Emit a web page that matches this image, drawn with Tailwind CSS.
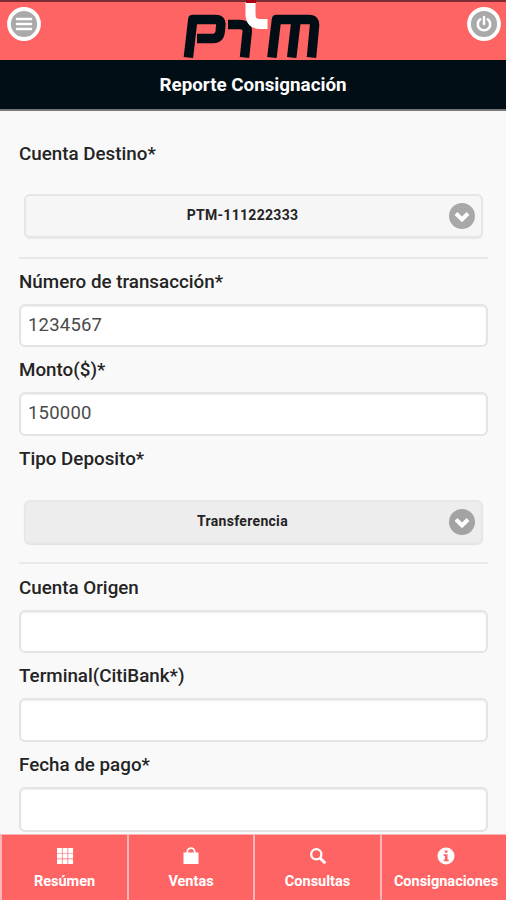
<!DOCTYPE html>
<html lang="es">
<head>
<meta charset="utf-8">
<title>Reporte Consignación</title>
<script src="https://cdn.jsdelivr.net/npm/@tailwindcss/browser@4"></script>
</head>
<body class="bg-[#f9f9f9]">
<div class="flex h-[900px] w-[506px] flex-col overflow-hidden bg-[#f9f9f9] font-['Roboto',sans-serif] text-[#242424]">
  <header class="flex h-[60px] shrink-0 items-start justify-between border-t-2 border-[#7d2c35] bg-[#ff6464] pr-[4px] pl-[6px]">
    <button class="mt-[4px] size-9" aria-label="Menú">
      <svg viewBox="0 0 36 36" class="size-9"><circle cx="18" cy="18" r="15" fill="#a9a9a9" stroke="#fff" stroke-width="3.800"/><path d="M11 13h14M11 18h14M11 23h14" stroke="#fff" stroke-width="2.600" stroke-linecap="round"/></svg>
    </button>
    <svg viewBox="183 2 142 58" class="-mt-[2px] h-[58px] w-[142px]">
      <g fill="none" stroke="#020e16" stroke-width="9.500" stroke-linejoin="round">
        <path d="M188.400 59.500L192.800 21.500H216Q221.500 21.500 220.800 27L220.300 33Q219.500 40.500 213 40.500H197"/>
        <path d="M228 26.500H239Q248 26.500 247.200 34L244.500 59.500"/>
        <path d="M271.900 59.500L276.500 21.500H309Q315.200 21.500 314.500 28L311.500 59.500M296.200 21.500L291.700 59.500"/>
      </g>
      <path d="M250.500 4V16Q250.500 26 260 26H267.500" fill="none" stroke="#fff" stroke-width="10"/>
      <path d="M246 2H256V5H246Z" fill="#a60015"/>
    </svg>
    <button class="mt-[4px] size-9" aria-label="Salir">
      <svg viewBox="0 0 36 36" class="size-9"><circle cx="18" cy="18" r="15" fill="#a9a9a9" stroke="#fff" stroke-width="3.800"/><path d="M14.300 13.200A6.200 6.200 0 1 0 21.700 13.200M18 11V18" fill="none" stroke="#fff" stroke-width="2.500" stroke-linecap="round"/></svg>
    </button>
  </header>
  <h1 class="flex h-[51px] shrink-0 items-center justify-center border-b-2 border-[#777] bg-[#020e16] pt-[2px] text-[18.800px] font-bold text-white">Reporte Consignación</h1>

  <main class="flex min-h-0 flex-1 flex-col overflow-hidden pt-[31px] pr-[18px] pl-[19px] text-[18.800px] leading-[25px] font-medium">
    <label class="h-6 shrink-0">Cuenta Destino*</label>
    <div class="mx-[5px] mt-[28px] flex h-[44px] shrink-0 items-center rounded-[6px] border-2 border-[#e6e6e6] bg-[#f6f6f6] pr-[6px] shadow-[0_1px_1px_#e8e8e8]">
      <span class="flex-1 pb-[2px] pl-[10px] text-center text-[14px] font-bold tracking-[0.300px]">PTM-111222333</span>
      <svg viewBox="0 0 26 26" class="mb-px size-[26px]"><circle cx="13" cy="13" r="13" fill="#a8a8a8"/><path d="M7 10.500L13 16.500L19 10.500" fill="none" stroke="#fff" stroke-width="4"/></svg>
    </div>
    <hr class="mt-[19px] shrink-0 border-t-2 border-[#e7e7e7]">
    <label class="mt-[11px] h-6 shrink-0">Número de transacción*</label>
    <div class="mt-[10px] flex h-[43px] shrink-0 items-center rounded-[6px] border-2 border-[#e4e4e4] bg-white px-[7px] text-[18.500px] font-normal tracking-[0.200px] text-[#4a4a4a] shadow-[inset_0_1px_2px_#eee]">1234567</div>
    <label class="mt-[11px] h-6 shrink-0">Monto($)*</label>
    <div class="mt-[10px] flex h-[44px] shrink-0 items-center rounded-[6px] border-2 border-[#e4e4e4] bg-white px-[7px] pb-px text-[18.500px] font-normal tracking-[0.200px] text-[#4a4a4a] shadow-[inset_0_1px_2px_#eee]">150000</div>
    <label class="mt-[11px] h-6 shrink-0">Tipo Deposito*</label>
    <div class="mx-[5px] mt-[29px] flex h-[44px] shrink-0 items-center rounded-[6px] border-2 border-[#e7e7e7] bg-[#ededed] pr-[6px] shadow-[0_1px_1px_#e2e2e2]">
      <span class="flex-1 pb-[2px] pl-[10px] text-center text-[14px] font-bold tracking-[0.300px]">Transferencia</span>
      <svg viewBox="0 0 26 26" class="mb-px size-[26px]"><circle cx="13" cy="13" r="13" fill="#a3a3a3"/><path d="M7 10.500L13 16.500L19 10.500" fill="none" stroke="#fff" stroke-width="4"/></svg>
    </div>
    <hr class="mt-[18px] shrink-0 border-t-2 border-[#e9e9e9]">
    <label class="mt-[12px] h-6 shrink-0">Cuenta Origen</label>
    <div class="mt-[10px] h-[43px] shrink-0 rounded-[6px] border-2 border-[#e4e4e4] bg-white shadow-[inset_0_1px_2px_#eee]"></div>
    <label class="mt-[11px] h-6 shrink-0">Terminal(CitiBank*)</label>
    <div class="mt-[10px] h-[44px] shrink-0 rounded-[6px] border-2 border-[#e4e4e4] bg-white shadow-[inset_0_1px_2px_#eee]"></div>
    <label class="mt-[11px] h-6 shrink-0">Fecha de pago*</label>
    <div class="mt-[10px] h-[45px] shrink-0 rounded-[6px] border-2 border-[#e4e4e4] bg-white shadow-[inset_0_1px_2px_#eee]"></div>
  </main>

  <nav class="grid h-[66px] shrink-0 grid-cols-[127px_126px_127px_126px] border-t border-[#ffb5b5] bg-[#ff6464] text-[14.500px] font-bold text-white">
    <a class="flex flex-col items-center border-l-2 border-[#ffb5b5] pt-[12px]">
      <svg viewBox="0 0 18 18" class="size-[18px]" fill="#fff"><path d="M1 1h4.900v4.900H1zM6.600 1h4.900v4.900H6.600zM12.200 1h4.900v4.900h-4.900zM1 6.600h4.900v4.900H1zM6.600 6.600h4.900v4.900H6.600zM12.200 6.600h4.900v4.900h-4.900zM1 12.200h4.900v4.900H1zM6.600 12.200h4.900v4.900H6.600zM12.200 12.200h4.900v4.900h-4.900z"/></svg>
      <span class="mt-[6px]">Resúmen</span>
    </a>
    <a class="flex flex-col items-center border-l-2 border-[#ffb5b5] pt-[12px]">
      <svg viewBox="0 0 18 18" class="size-[18px]"><path d="M1.500 5.500h15v11.500h-15z" fill="#fff"/><path d="M5.300 7V4.800a3.700 3.700 0 0 1 7.400 0V7" fill="none" stroke="#fff" stroke-width="1.800"/></svg>
      <span class="mt-[6px]">Ventas</span>
    </a>
    <a class="flex flex-col items-center border-l-2 border-[#ffb5b5] pt-[12px]">
      <svg viewBox="0 0 18 18" class="size-[18px]" fill="none" stroke="#fff"><circle cx="7.300" cy="7.300" r="5.100" stroke-width="2.300"/><path d="M11 11l5.300 5.300" stroke-width="3"/></svg>
      <span class="mt-[6px]">Consultas</span>
    </a>
    <a class="flex flex-col items-center border-l-2 border-[#ffb5b5] pt-[12px] pl-[4px]">
      <svg viewBox="0 0 18 18" class="size-[18px]"><circle cx="9" cy="9" r="8.500" fill="#fff"/><path d="M7.700 3.500h2.800v2.300H7.700zM6.700 7.200h3.800v5.300h1.200v1.700h-5v-1.700h1.200V8.900H6.700z" fill="#ff6464"/></svg>
      <span class="mt-[6px]">Consignaciones</span>
    </a>
  </nav>
</div>
</body>
</html>
